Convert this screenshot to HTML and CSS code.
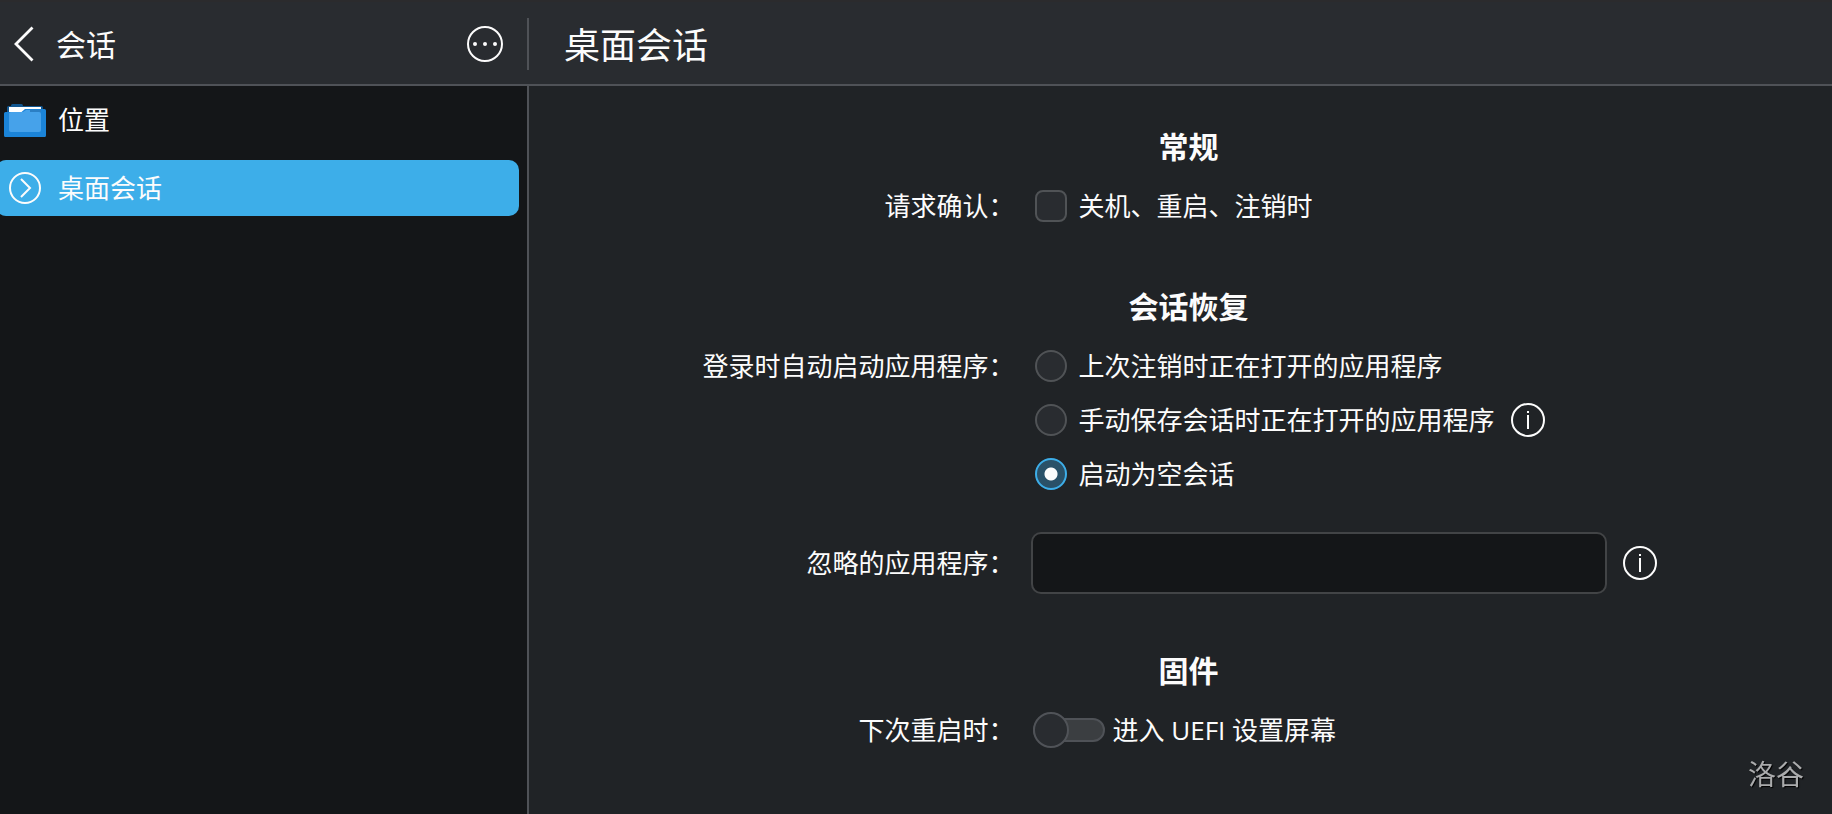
FILE: index.html
```html
<!DOCTYPE html>
<html lang="zh-CN">
<head>
    <meta charset="UTF-8">
    <meta name="viewport" content="width=device-width, initial-scale=1.0">
    <title>桌面会话</title>
    <link rel="stylesheet" href="styles.css">
</head>
<body>
    <header class="toolbar">
        <div class="toolbar-side">
            <button type="button" class="icon-button" aria-label="返回">
                <svg width="24" height="36" viewBox="0 0 24 36" fill="none" stroke="#fcfcfc" stroke-width="2.8">
                    <path d="M20.500 1.500L4 18L20.500 34.500"/>
                </svg>
            </button>
            <h2 class="side-title">会话</h2>
            <button type="button" class="icon-button" aria-label="更多">
                <svg width="36" height="36" viewBox="0 0 36 36">
                    <circle cx="18" cy="18" r="17" fill="none" stroke="#fcfcfc" stroke-width="2"/>
                    <circle cx="8" cy="18" r="2" fill="#fcfcfc"/>
                    <circle cx="18" cy="18" r="2" fill="#fcfcfc"/>
                    <circle cx="28" cy="18" r="2" fill="#fcfcfc"/>
                </svg>
            </button>
        </div>
        <h1 class="page-title">桌面会话</h1>
    </header>

    <div class="layout">
        <nav class="sidebar">
            <a href="#" class="side-item">
                <svg width="42" height="34" viewBox="0 -1 42 34">
                    <path d="M3 10V3.500Q3 2 4.500 2H7V1.500Q7 0 8.500 0H17.500Q19 0 19 2H37.500Q39 2 39 3.500V10Z" fill="#12568f"/>
                    <rect x="5" y="3" width="32" height="8" fill="#fff"/>
                    <path d="M1.500 8H17.500L21 5H40.500Q42 5 42 6.500V31.500Q42 33 40.500 33H1.500Q0 33 0 31.500V9.500Q0 8 1.500 8Z" fill="#1b84d8"/>
                    <rect x="5" y="8" width="32" height="20" rx="2" fill="#46a2ea"/>
                    <path d="M19 8L22 6H37V8Z" fill="#46a2ea"/>
                    <path d="M26 6H37V8H26Z" fill="#2b7fc4"/>
                </svg>
                <span>位置</span>
            </a>
            <a href="#" class="side-item side-item-active">
                <svg width="42" height="34" viewBox="0 0 42 34" fill="none" stroke="#fcfcfc" stroke-width="2">
                    <circle cx="21" cy="17" r="15"/>
                    <path d="M17 8L26 17L17 26"/>
                </svg>
                <span>桌面会话</span>
            </a>
        </nav>

        <main class="content">
            <form class="form">
                <h3 class="form-heading">常规</h3>
                <span class="form-label">请求确认：</span>
                <div class="form-control">
                    <input type="checkbox" id="confirm-logout" class="check">
                    <label for="confirm-logout">关机、重启、注销时</label>
                </div>

                <h3 class="form-heading form-heading-restore">会话恢复</h3>
                <span class="form-label">登录时自动启动应用程序：</span>
                <div class="form-control">
                    <input type="radio" name="restore" id="restore-last" class="check radio">
                    <label for="restore-last">上次注销时正在打开的应用程序</label>
                </div>
                <div class="form-control">
                    <input type="radio" name="restore" id="restore-saved" class="check radio">
                    <label for="restore-saved">手动保存会话时正在打开的应用程序</label>
                    <button type="button" class="icon-button info-button" aria-label="说明">
                        <svg width="34" height="34" viewBox="0 0 34 34">
                            <circle cx="17" cy="17" r="16" fill="none" stroke="#fcfcfc" stroke-width="2"/>
                            <path d="M16 8H18V10H16ZM16 12H18V26H16Z" fill="#fcfcfc"/>
                        </svg>
                    </button>
                </div>
                <div class="form-control">
                    <input type="radio" name="restore" id="restore-empty" class="check radio" checked>
                    <label for="restore-empty">启动为空会话</label>
                </div>

                <label class="form-label form-label-field" for="ignored-apps">忽略的应用程序：</label>
                <div class="form-field">
                    <input type="text" id="ignored-apps" class="text-field">
                    <button type="button" class="icon-button" aria-label="说明">
                        <svg width="34" height="34" viewBox="0 0 34 34">
                            <circle cx="17" cy="17" r="16" fill="none" stroke="#fcfcfc" stroke-width="2"/>
                            <path d="M16 8H18V10H16ZM16 12H18V26H16Z" fill="#fcfcfc"/>
                        </svg>
                    </button>
                </div>

                <h3 class="form-heading form-heading-firmware">固件</h3>
                <span class="form-label">下次重启时：</span>
                <div class="form-control form-control-switch">
                    <input type="checkbox" role="switch" id="enter-uefi" class="switch">
                    <label for="enter-uefi">进入 UEFI 设置屏幕</label>
                </div>
            </form>
        </main>
    </div>

    <div class="watermark">洛谷</div>
</body>
</html>
```
FILE: styles.css
```css
* {
    box-sizing: border-box;
}
body {
    display: flex;
    flex-direction: column;
    min-height: 100vh;
    margin: 0;
    background-color: #202326;
    color: #fcfcfc;
    font-family: "Open Sans", "Noto Sans CJK SC", sans-serif;
    font-size: 26px;
    line-height: 36px;
}
h1, h2, h3 {
    margin: 0;
}
.icon-button {
    display: flex;
    padding: 0;
    border: none;
    background: none;
    cursor: pointer;
}

/* top bar */
.toolbar {
    display: flex;
    align-items: center;
    height: 86px;
    padding-top: 2px;
    border-top: 2px solid #2b2b2d;
    border-bottom: 2px solid #4f5257;
    background-color: #292c30;
}
.toolbar-side {
    display: flex;
    align-items: center;
    width: 529px;
    height: 52px;
    padding: 0 24px 0 12px;
    border-right: 2px solid #4f5257;
}
.side-title {
    flex-grow: 1;
    margin-left: 20px;
    padding-top: 2px;
    font-size: 30px;
    font-weight: 400;
}
.page-title {
    margin-left: 35px;
    padding-top: 4px;
    font-size: 36px;
    font-weight: 400;
}

.layout {
    display: flex;
    flex-grow: 1;
}

/* left list */
.sidebar {
    display: flex;
    flex-direction: column;
    gap: 12px;
    width: 529px;
    padding: 6px 8px 0 0;
    border-right: 2px solid #4f5257;
    background-color: #141618;
}
.side-item {
    display: flex;
    align-items: center;
    gap: 12px;
    height: 56px;
    margin-left: -4px;
    padding-left: 8px;
    border-radius: 10px;
    color: #fcfcfc;
    text-decoration: none;
}
.side-item-active {
    background-color: #3daee9;
}

/* settings form */
.content {
    flex-grow: 1;
    padding: 43px 2px 0 0;
}
.form {
    display: grid;
    grid-template-columns: auto auto;
    justify-content: center;
    gap: 18px 16px;
}
.form-heading {
    grid-column: 1 / 3;
    margin: 0 0 5px 18px;
    font-size: 30px;
    font-weight: 700;
    text-align: center;
}
.form-heading-restore {
    margin-top: 47px;
}
.form-heading-firmware {
    margin-top: 41px;
}
.form-label {
    grid-column: 1;
    text-align: right;
}
.form-label-field {
    align-self: center;
    margin-top: 22px;
}
.form-control {
    grid-column: 2;
    display: flex;
    align-items: center;
    gap: 12px;
    height: 36px;
    padding-left: 4px;
}
.form-control-switch {
    gap: 8px;
    padding-left: 2px;
}
.info-button {
    margin-left: 4px;
}
.form-field {
    display: flex;
    align-items: center;
    gap: 16px;
    margin-top: 22px;
}
.text-field {
    width: 576px;
    height: 62px;
    padding: 0 12px;
    border: 2px solid #424446;
    border-radius: 10px;
    background-color: #141618;
    color: #fcfcfc;
    font: inherit;
}
.check {
    appearance: none;
    width: 32px;
    height: 32px;
    margin: 0;
    border: 2px solid #505356;
    border-radius: 8px;
    background-color: #292c30;
}
.radio {
    border-radius: 50%;
}
.radio:checked {
    border-color: #3daee9;
    background: radial-gradient(circle, #fcfcfc 6px, #2a5168 7px);
}
.switch {
    appearance: none;
    display: flex;
    align-items: center;
    width: 72px;
    height: 24px;
    margin: 0;
    border: 2px solid #4f5257;
    border-radius: 12px;
    background-color: #3b3e41;
}
.switch::before {
    content: "";
    flex-shrink: 0;
    width: 36px;
    height: 36px;
    margin-left: -2px;
    box-sizing: border-box;
    border: 2px solid #505358;
    border-radius: 50%;
    background-color: #292c30;
}
.switch:checked::before {
    margin-left: 34px;
}

.watermark {
    position: fixed;
    right: 28px;
    bottom: 22px;
    color: #aaabac;
    font-size: 28px;
    text-shadow: 1px 1px 1px #000;
}
```
